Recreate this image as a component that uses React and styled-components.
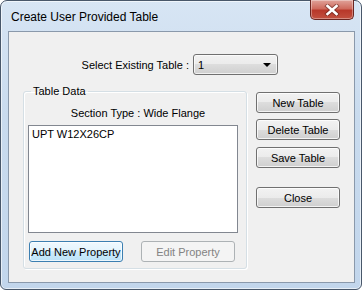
import React from "react";
import styled, { createGlobalStyle, css } from "styled-components";

const Global = createGlobalStyle`
  html, body { margin: 0; padding: 0; background: #ffffff; }
  body { font-family: "Liberation Sans", Arial, sans-serif; font-size: 11px; color: #000; }
`;

const Window = styled.div`
  box-sizing: border-box;
  width: 362px;
  height: 290px;
  border: 1px solid #48576a;
  border-radius: 7px 7px 6px 6px;
  background: linear-gradient(180deg, #d7e5f4 0%, #c9dbee 40%, #c2d6ec 100%);
  display: flex;
  flex-direction: column;
  padding: 0 6px 6px 7px;
  box-shadow: inset 0 0 0 1px rgba(255,255,255,0.6);
`;

const TitleBar = styled.div`
  height: 30px;
  display: flex;
  align-items: flex-start;
  justify-content: space-between;
`;

const Title = styled.div`
  font-family: "Liberation Sans", Arial, sans-serif;
  font-size: 12px;
  color: #000;
  padding: 9px 0 0 3px;
`;

const CloseBtn = styled.div`
  box-sizing: border-box;
  width: 44px;
  height: 20px;
  margin-top: -1px;
  margin-right: 1px;
  border: 1px solid #6b2520;
  border-top: none;
  border-radius: 0 0 5px 5px;
  background: linear-gradient(180deg, #e0a39a 0%, #cf6b5e 45%, #b8382a 55%, #c2503f 100%);
  display: flex;
  align-items: center;
  justify-content: center;
  box-shadow: inset 0 0 0 1px rgba(255,255,255,0.35);
`;

const Client = styled.div`
  flex: 1;
  box-sizing: border-box;
  border: 1px solid #8a99ab;
  background: #f0f0f0;
  display: flex;
  flex-direction: column;
  padding: 22px 0 0 0;
`;

const TopRow = styled.div`
  display: flex;
  align-items: center;
  justify-content: flex-end;
  padding-right: 76px;
  gap: 4px;
`;

const Label = styled.span`
  white-space: nowrap;
  color: #000;
`;

const Combo = styled.div`
  box-sizing: border-box;
  width: 85px;
  height: 21px;
  border: 1px solid #707070;
  border-radius: 3px;
  background: linear-gradient(180deg, #f2f2f2 0%, #ebebeb 50%, #dddddd 50%, #cfcfcf 100%);
  display: flex;
  align-items: center;
  justify-content: space-between;
  padding: 0 6px 0 4px;
  box-shadow: inset 0 0 0 1px rgba(255,255,255,0.7);
`;

const Arrow = styled.span`
  width: 0;
  height: 0;
  border-left: 4px solid transparent;
  border-right: 4px solid transparent;
  border-top: 4px solid #000;
`;

const Body = styled.div`
  display: flex;
  align-items: flex-start;
  padding: 5px 0 0 14px;
`;

const Group = styled.fieldset`
  box-sizing: border-box;
  width: 224px;
  height: 184px;
  margin: 5px 0 0 0;
  border: 1px solid #d5dfe5;
  border-radius: 3px;
  padding: 0 8px 0 4px;
  display: flex;
  flex-direction: column;
  box-shadow: inset 1px 1px 0 #fff, 1px 1px 0 #fff;
`;

const Legend = styled.legend`
  padding: 0 2px;
  margin-left: 3px;
  line-height: 13px;
`;

const SectionType = styled.div`
  text-align: center;
  padding: 9px 0 0 10px;
  height: 24px;
  box-sizing: border-box;
`;

const ListBox = styled.div`
  box-sizing: border-box;
  height: 108px;
  margin-top: 3px;
  background: #fff;
  border: 1px solid #828790;
  padding: 2px 3px;
  line-height: 13px;
`;

const GroupButtons = styled.div`
  display: flex;
  gap: 18px;
  margin-top: 8px;
  padding-left: 1px;
`;

const Button = styled.div`
  box-sizing: border-box;
  width: ${(p) => p.$w || 84}px;
  height: 21px;
  border: 1px solid #707070;
  border-radius: 3px;
  display: flex;
  align-items: center;
  justify-content: center;
  white-space: nowrap;
  background: linear-gradient(180deg, #f2f2f2 0%, #ebebeb 50%, #dddddd 50%, #cfcfcf 100%);
  box-shadow: inset 0 0 0 1px rgba(255,255,255,0.75);
  margin-top: ${(p) => p.$mt || 0}px;
  ${(p) =>
    p.$focused &&
    css`
      border-color: #3c7fb1;
      background: linear-gradient(180deg, #f0f9fe 0%, #e3f4fd 50%, #cdebfb 50%, #bde3f8 100%);
      box-shadow: inset 0 0 0 1px rgba(255,255,255,0.7);
    `}
  ${(p) =>
    p.$disabled &&
    css`
      border-color: #adb2b5;
      background: #f4f4f4;
      color: #838383;
      box-shadow: none;
    `}
`;

const SideButtons = styled.div`
  display: flex;
  flex-direction: column;
  margin-left: 9px;
  padding-top: 12px;
`;

function CloseX() {
  return (
    <svg width="16" height="12" viewBox="0 0 16 12">
      <path
        d="M3.5 2 L12.5 10 M12.5 2 L3.5 10"
        stroke="#5a1e18"
        strokeWidth="4.4"
        fill="none"
        strokeLinecap="square"
        opacity="0.55"
      />
      <path
        d="M3.5 2 L12.5 10 M12.5 2 L3.5 10"
        stroke="#ffffff"
        strokeWidth="2.6"
        fill="none"
        strokeLinecap="square"
      />
    </svg>
  );
}

export default function App() {
  return (
    <>
      <Global />
      <Window>
        <TitleBar>
          <Title>Create User Provided Table</Title>
          <CloseBtn>
            <CloseX />
          </CloseBtn>
        </TitleBar>
        <Client>
          <TopRow>
            <Label>Select Existing Table :</Label>
            <Combo>
              <span>1</span>
              <Arrow />
            </Combo>
          </TopRow>
          <Body>
            <Group>
              <Legend>Table Data</Legend>
              <SectionType>Section Type : Wide Flange</SectionType>
              <ListBox>UPT W12X26CP</ListBox>
              <GroupButtons>
                <Button $w={94} $focused>Add New Property</Button>
                <Button $w={94} $disabled>Edit Property</Button>
              </GroupButtons>
            </Group>
            <SideButtons>
              <Button>New Table</Button>
              <Button $mt={6}>Delete Table</Button>
              <Button $mt={7}>Save Table</Button>
              <Button $mt={19}>Close</Button>
            </SideButtons>
          </Body>
        </Client>
      </Window>
    </>
  );
}
